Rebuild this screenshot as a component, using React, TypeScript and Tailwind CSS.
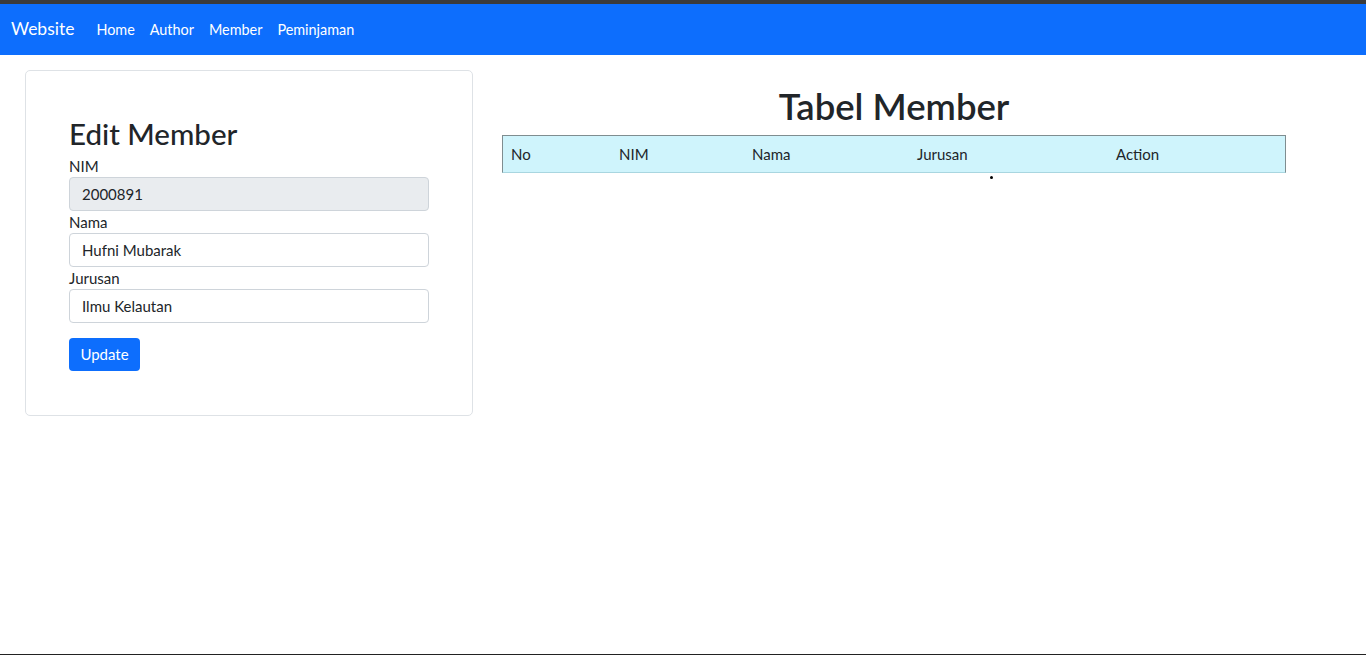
import React from 'react';

const font = { fontFamily: 'Lato, "Noto Sans", sans-serif' };

const Field: React.FC<{ label: string; value: string; disabled?: boolean }> = ({ label, value, disabled }) => (
  <div className="flex flex-col">
    <label className="text-[15px] leading-[22px] text-[#212529]">{label}</label>
    <input
      readOnly
      disabled={disabled}
      value={value}
      className={`h-[34px] w-[360px] rounded-[4px] border border-[#ced4da] px-3 text-[15px] text-[#212529] outline-none ${disabled ? 'bg-[#e9ecef]' : 'bg-white'}`}
      style={font}
    />
  </div>
);

const App: React.FC = () => {
  const cols = [
    { name: 'No', w: 'w-[108px]' },
    { name: 'NIM', w: 'w-[133px]' },
    { name: 'Nama', w: 'w-[165px]' },
    { name: 'Jurusan', w: 'w-[199px]' },
    { name: 'Action', w: 'flex-1' },
  ];

  return (
    <div className="flex h-[655px] flex-col bg-white text-[#212529]" style={font}>
      <div className="h-[4px] shrink-0 bg-[#3b3b3b]" />
      <nav className="flex h-[51px] shrink-0 items-center bg-[#0d6efd] pl-[11px] text-white">
        <span className="mr-[22px] text-[17.5px]">Website</span>
        <div className="flex items-center gap-[15px] text-[14.4px]">
          <a>Home</a>
          <a>Author</a>
          <a>Member</a>
          <a>Peminjaman</a>
        </div>
      </nav>

      <main className="flex flex-1 items-start gap-[29px] pl-[25px] pt-[15px]">
        <div className="flex w-[448px] flex-col rounded-[5px] border border-[#dee2e6] px-[43px] pb-[44px] pt-[44px]">
          <h2 className="mb-[2px] text-[29.5px] font-medium leading-[38px]">Edit Member</h2>
          <div className="flex flex-col">
            <Field label="NIM" value="2000891" disabled />
            <Field label="Nama" value="Hufni Mubarak" />
            <Field label="Jurusan" value="Ilmu Kelautan" />
          </div>
          <button className="mt-[15px] h-[33px] w-[71px] rounded-[4px] bg-[#0d6efd] text-[15px] text-white" style={font}>
            Update
          </button>
        </div>

        <div className="flex w-[784px] flex-col pt-[14px]">
          <h1 className="mb-[7px] text-center text-[36.5px] font-semibold leading-[44px]">Tabel Member</h1>
          <div className="flex h-[38px] items-center border border-[#7f8d90] border-b-[#a9d6e0] bg-[#cff4fc] pl-[8px] text-[15px]">
            {cols.map(c => (
              <div key={c.name} className={c.w}>{c.name}</div>
            ))}
          </div>
          <div className="flex h-[8px] items-center pl-[488px]">
            <span className="h-[3px] w-[3px] rounded-full bg-black" />
          </div>
        </div>
      </main>
      <div className="h-[1px] shrink-0 bg-[#222]" />
    </div>
  );
};

export default App;
